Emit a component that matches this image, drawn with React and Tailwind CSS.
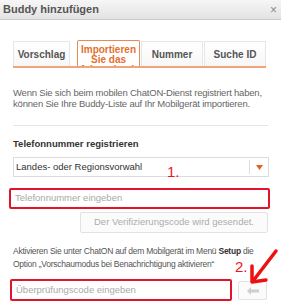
import React from 'react';

const tabs = ['Vorschlag', 'Importieren Sie das Adressbuch', 'Nummer', 'Suche ID'];

export default function App() {
  return (
    <div className="relative w-[281px] h-[307px] overflow-hidden bg-white font-['Liberation_Sans',Arial,sans-serif]">
      {/* Header */}
      <div className="h-[20px] flex items-center justify-between pl-[3px] pr-[4px] bg-gradient-to-b from-[#f6f6f6] to-[#e3e3e3] border-b border-[#c9c9c9]">
        <span className="text-[11px] font-bold text-[#555] leading-none">Buddy hinzufügen</span>
        <span className="text-[12px] text-[#8a8a8a] leading-none">×</span>
      </div>

      <div className="px-[13px] pt-[21px]">
        {/* Tabs */}
        <div className="flex items-end h-[27px] border-b-2 border-[#efa47a] w-[253px]">
          <div className="w-[57px] h-[25px] mr-[7px] border border-b-0 border-[#e6e6e6] bg-gradient-to-b from-white to-[#f7f7f7] flex items-center justify-center text-[10px] font-bold text-[#555]">
            {tabs[0]}
          </div>
          <div className="w-[63px] h-[26px] mr-[1px] border border-b-0 border-[#e58b58] rounded-t-[2px] overflow-hidden bg-white text-center pt-[4px] text-[10px] leading-[10px] font-bold text-[#e4702f]">
            {tabs[1]}
          </div>
          <div className="w-[62px] h-[25px] mr-[1px] border border-b-0 border-[#e6e6e6] bg-gradient-to-b from-white to-[#f7f7f7] flex items-center justify-center text-[10px] font-bold text-[#555]">
            {tabs[2]}
          </div>
          <div className="w-[62px] h-[25px] border border-b-0 border-[#e6e6e6] bg-gradient-to-b from-white to-[#f7f7f7] flex items-center justify-center text-[10px] font-bold text-[#555]">
            {tabs[3]}
          </div>
        </div>

        {/* Intro */}
        <p className="mt-[20px] text-[9.5px] leading-[10.5px] text-[#666] tracking-[-0.2px]">
          Wenn Sie sich beim mobilen ChatON-Dienst registriert haben, können Sie Ihre Buddy-Liste auf Ihr Mobilgerät importieren.
        </p>

        <div className="mt-[16px] h-px bg-[#e4e4e4] w-[255px]" />

        <div className="mt-[12px] text-[9.5px] font-bold text-[#333] leading-[11px]">Telefonnummer registrieren</div>

        {/* Select */}
        <div className="mt-[8px] h-[20px] w-[256px] border border-[#dcdcdc] flex items-center">
          <span className="flex-1 pl-[2px] text-[9.5px] text-[#333]">Landes- oder Regionsvorwahl</span>
          <span className="w-px h-[14px] bg-[#dedede]" />
          <span className="w-[18px] flex items-center justify-center">
            <svg width="7" height="5" viewBox="0 0 7 5">
              <path d="M0 0h7L3.5 5z" fill="#e0631e" />
            </svg>
          </span>
        </div>

        {/* Phone input */}
        <div className="mt-[11px] -ml-[4px] w-[261px] h-[21px] border-2 border-[#e3132b] rounded-[2px] flex items-center pl-[4px]">
          <span className="text-[9.5px] text-[#a9a9a9]">Telefonnummer eingeben</span>
        </div>

        <div className="mt-[3px] ml-[67px] w-[188px] h-[21px] border border-[#e2e2e2] rounded-[2px] bg-[#fbfbfb] flex items-center justify-center text-[9.5px] text-[#acacac]">
          Der Verifizierungscode wird gesendet.
        </div>

        {/* Instructions */}
        <p className="mt-[12px] w-[250px] text-[8.5px] leading-[13px] text-[#555] tracking-[-0.25px]">
          Aktivieren Sie unter ChatON auf dem Mobilgerät im Menü <b className="text-[#333]">Setup</b> die Option „Vorschaumodus bei Benachrichtigung aktivieren“
        </p>

        {/* Code input */}
        <div className="mt-[8px] flex items-start">
          <div className="-ml-[3px] w-[222px] h-[22px] border-2 border-[#e3132b] rounded-[2px] flex items-center pl-[4px]">
            <span className="text-[9.5px] text-[#a9a9a9]">Überprüfungscode eingeben</span>
          </div>
          <div className="mt-[2px] ml-[6px] w-[29px] h-[19px] border border-[#e2e2e2] rounded-[2px] bg-[#fbfbfb] flex items-center justify-center">
            <svg width="12" height="8" viewBox="0 0 12 8">
              <path d="M0 4l4-4v2.5h8v3H4V8z" fill="#cfcfcf" />
            </svg>
          </div>
        </div>
      </div>

      {/* Annotations */}
      <span className="absolute left-[167px] top-[164px] text-[15px] leading-none text-[#f0141e]">1.</span>
      <span className="absolute left-[235px] top-[259px] text-[15px] leading-none text-[#f0141e]">2.</span>
      <svg className="absolute left-[246px] top-[247px]" width="35" height="40" viewBox="0 0 35 40">
        <path d="M30 4L7 34" stroke="#ee1111" strokeWidth="3.5" strokeLinecap="round" fill="none" />
        <path d="M6 19L6 35L20 33" stroke="#ee1111" strokeWidth="3.5" strokeLinecap="round" strokeLinejoin="round" fill="none" />
      </svg>
    </div>
  );
}
